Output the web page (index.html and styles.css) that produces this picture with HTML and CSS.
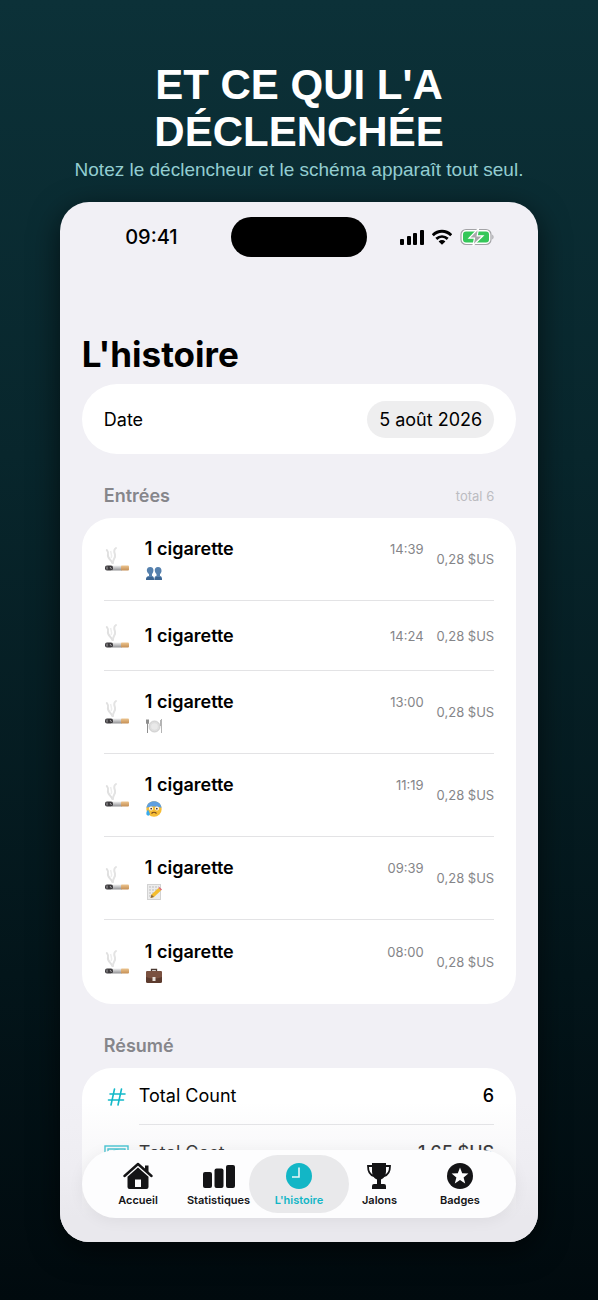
FILE: index.html
```html
<!DOCTYPE html>
<html lang="fr">
<head>
  <meta charset="UTF-8">
  <meta name="viewport" content="width=device-width, initial-scale=1.0">
  <title>L'histoire</title>
  <link rel="stylesheet" href="styles.css">
</head>
<body>
  <!-- shared icons -->
  <svg class="sprite" aria-hidden="true">
    <defs>
      <linearGradient id="filterGrad" x1="0" y1="0" x2="0" y2="1">
        <stop offset="0" stop-color="#ecc48e"/>
        <stop offset="1" stop-color="#c48e54"/>
      </linearGradient>
      <linearGradient id="paperGrad" x1="0" y1="0" x2="0" y2="1">
        <stop offset="0" stop-color="#f0f0f0"/>
        <stop offset="1" stop-color="#8f8f92"/>
      </linearGradient>
    </defs>
    <symbol id="cigarette" viewBox="0 0 26 26">
      <path d="M8.500 17C7 13.500 3 12 4 8.500 4.800 6.500 3.500 5 2.800 4" fill="none" stroke="#e0e0e0" stroke-width="2" stroke-linecap="round"/>
      <path d="M9 17c-.5-4 3-5 2-8.500C10.200 6 9 4 12 2" fill="none" stroke="#e3e3e3" stroke-width="2" stroke-linecap="round"/>
      <path d="M7 12c1.500-3 0-5-.5-7" fill="none" stroke="#eeeeee" stroke-width="1.500"/>
      <rect x="8" y="19.500" width="10" height="5" fill="url(#paperGrad)"/>
      <rect x="1" y="19.500" width="8" height="5" rx="2" fill="#3c3a3d"/>
      <path d="M3 20.500v3M6 21l1.500 2" stroke="#a5a3a6" stroke-width="1"/>
      <rect x="17" y="19.500" width="8" height="5" rx="1" fill="url(#filterGrad)"/>
    </symbol>
  </svg>

  <header class="intro">
    <h1>Et ce qui l'a déclenchée</h1>
    <p>Notez le déclencheur et le schéma apparaît tout seul.</p>
  </header>

  <div class="phone">
    <div class="status-bar">
      <span class="clock">09:41</span>
      <span class="island"></span>
      <span class="status-icons">
        <svg width="24" height="16" viewBox="0 0 24 16">
          <rect x="0" y="10" width="4" height="6" rx="1"/>
          <rect x="7" y="7" width="4" height="9" rx="1"/>
          <rect x="13" y="4" width="4" height="12" rx="1"/>
          <rect x="20" y="1" width="4" height="15" rx="1"/>
        </svg>
        <svg width="20" height="16" viewBox="0 0 20 16">
          <g fill="none" stroke="#000" stroke-width="2.800">
            <path d="M.8 6.200C6 .9 14 .9 19.200 6.200"/>
            <path d="M4.300 9.900C7.700 6.800 12.300 6.800 15.700 9.900"/>
          </g>
          <path d="M10 15.700l-3.400-3.300c2-1.800 4.800-1.800 6.800 0z"/>
        </svg>
        <svg width="34" height="18" viewBox="0 0 34 18">
          <rect x="1" y="1.500" width="30" height="15" rx="5" fill="#fff" stroke="#a3a3a6" stroke-width="1.200"/>
          <rect x="3" y="3.500" width="26" height="11" rx="3" fill="#34c759"/>
          <path d="M32.300 6.500c1.600.8 1.600 4.200 0 5z" fill="#a3a3a6"/>
          <path d="M18.500 .5L9 10.200h5.500L13 17.500 23 7.800h-5.800z" fill="#a9a9ab" stroke="#fff" stroke-width="1.200"/>
        </svg>
      </span>
    </div>

    <main class="screen">
      <h2>L'histoire</h2>

      <section class="card date-card">
        <label for="dateBtn">Date</label>
        <button type="button" id="dateBtn">5 août 2026</button>
      </section>

      <div class="section-head">
        <h3>Entrées</h3>
        <span>total 6</span>
      </div>
      <ul class="card entries">
        <li>
          <svg class="cig"><use href="#cigarette"/></svg>
          <div class="info">
            <div class="line"><strong>1 cigarette</strong><time>14:39</time></div>
            <div class="trigger">
              <svg viewBox="0 0 16 16">
                <g fill="#5580ad">
                  <path d="M0 15c0-3 1-4 3-4V9C0 7 0 2 4.200 2S8 7 6 9v2c1.500 0 2 1 2 4z"/>
                  <path d="M8.500 15c0-3 0-4 2-4V9C8 7 8 2 12 2s4.500 5 2 7v2c1.500 0 2 1 2 4z"/>
                </g>
                <path d="M0 15c0-2 1-3 2-3h4c1 0 2 1 2 3zM8.500 15c0-2 1-3 2-3H14c1 0 2 1 2 3z" fill="#3c6592"/>
              </svg>
            </div>
          </div>
          <span class="price">0,28 $US</span>
        </li>
        <li class="short">
          <svg class="cig"><use href="#cigarette"/></svg>
          <div class="info">
            <div class="line"><strong>1 cigarette</strong><time>14:24</time></div>
          </div>
          <span class="price">0,28 $US</span>
        </li>
        <li>
          <svg class="cig"><use href="#cigarette"/></svg>
          <div class="info">
            <div class="line"><strong>1 cigarette</strong><time>13:00</time></div>
            <div class="trigger">
              <svg viewBox="0 0 16 16">
                <circle cx="8.500" cy="8.500" r="5.500" fill="#dedede" stroke="#cfcfcf"/>
                <circle cx="8.500" cy="8.500" r="3.300" fill="#e9e9e9"/>
                <path d="M.5 1.500v4h2v-4M1.500 1.500V15" fill="none" stroke="#8e8e8e"/>
                <path d="M15.500 1v14M14.500 2v6" fill="none" stroke="#b4b4b4"/>
              </svg>
            </div>
          </div>
          <span class="price">0,28 $US</span>
        </li>
        <li>
          <svg class="cig"><use href="#cigarette"/></svg>
          <div class="info">
            <div class="line"><strong>1 cigarette</strong><time>11:19</time></div>
            <div class="trigger">
              <svg viewBox="0 0 16 16">
                <circle cx="8" cy="8" r="7.700" fill="#f6bd35"/>
                <path d="M.5 7C1 2.500 4 .3 8 .3s7 2.200 7.500 6.700C12 5 4 5 .5 7z" fill="#5f9fe0"/>
                <circle cx="5" cy="7.500" r="2" fill="#fff"/>
                <circle cx="11" cy="7.500" r="2" fill="#fff"/>
                <circle cx="5.200" cy="7.700" r=".9" fill="#5b3a1d"/>
                <circle cx="10.800" cy="7.700" r=".9" fill="#5b3a1d"/>
                <path d="M5.500 12.500c1.500-1.700 3.500-1.700 5 0" fill="none" stroke="#7b4a1b" stroke-width="1.200"/>
                <path d="M2 8.500C.5 10.500 0 12 .5 13.500s3 1.500 3.300 0C4 12 3 10.500 2 8.500z" fill="#37aaf0"/>
              </svg>
            </div>
          </div>
          <span class="price">0,28 $US</span>
        </li>
        <li>
          <svg class="cig"><use href="#cigarette"/></svg>
          <div class="info">
            <div class="line"><strong>1 cigarette</strong><time>09:39</time></div>
            <div class="trigger">
              <svg viewBox="0 0 16 16">
                <rect x="1.500" y=".5" width="13" height="15" fill="#ececec" stroke="#d2d2d2"/>
                <path d="M3 3h10M3 6h8M3 9h5M3 12h3" stroke="#bdbdbd" stroke-dasharray="2 1"/>
                <path d="M4.500 14l1-3.500L12.500 4 15 6.500 8 13z" fill="#f4bd2e"/>
                <path d="M12.500 4l1-1L16 5.500l-1 1z" fill="#de6872"/>
                <path d="M4.500 14l1-3.500L8 13z" fill="#8d6a40"/>
              </svg>
            </div>
          </div>
          <span class="price">0,28 $US</span>
        </li>
        <li>
          <svg class="cig"><use href="#cigarette"/></svg>
          <div class="info">
            <div class="line"><strong>1 cigarette</strong><time>08:00</time></div>
            <div class="trigger">
              <svg viewBox="0 0 16 16">
                <path d="M5.500 4V1.500h5V4" fill="none" stroke="#4b3a33" stroke-width="1.300"/>
                <rect y="3" width="16" height="12" rx="1.500" fill="#5d3b2e"/>
                <path d="M0 4.500Q0 3 1.500 3h13Q16 3 16 4.500V9Q8 12 0 9z" fill="#7a5140"/>
                <rect x="6.500" y="9" width="3" height="4" fill="#e6dfd8"/>
              </svg>
            </div>
          </div>
          <span class="price">0,28 $US</span>
        </li>
      </ul>

      <div class="section-head">
        <h3>Résumé</h3>
      </div>
      <ul class="card summary">
        <li>
          <svg width="26" height="20" viewBox="0 0 26 20">
            <path d="M10.500 2l-3.500 16M17.500 2L14 18M6 7h15M4.500 13h15" fill="none" stroke="#12b9c9" stroke-width="1.600" stroke-linecap="round"/>
          </svg>
          <div class="row"><span>Total Count</span><b>6</b></div>
        </li>
        <li>
          <svg width="26" height="20" viewBox="0 0 26 20">
            <g fill="none" stroke="#12b9c9" stroke-width="1.400">
              <rect x="1" y="3" width="23" height="15"/>
              <path d="M4 15V6h17v9z"/>
              <circle cx="12.500" cy="11" r="4"/>
            </g>
          </svg>
          <div class="row"><span>Total Cost</span><b>1,65 $US</b></div>
        </li>
      </ul>
    </main>

    <nav class="tab-bar">
      <a href="#">
        <svg width="30" height="28" viewBox="0 0 30 28">
          <path d="M1.500 14L15 2l13.500 12" fill="none" stroke="#141416" stroke-width="2.400" stroke-linecap="round" stroke-linejoin="round"/>
          <path d="M22 3.500h3.500v7.500L22 8z"/>
          <path d="M15 5.500l10.500 9.300V25q0 2-2 2h-17q-2 0-2-2V14.800zM12 17.500V25h6v-7.500z" fill-rule="evenodd"/>
        </svg>
        Accueil
      </a>
      <a href="#">
        <svg width="32" height="28" viewBox="0 0 32 28">
          <rect x="0" y="10" width="9" height="16" rx="2"/>
          <rect x="11.500" y="6.500" width="9" height="19.500" rx="2"/>
          <rect x="23" y="3" width="9" height="23" rx="2"/>
        </svg>
        Statistiques
      </a>
      <a href="#" class="active">
        <svg width="28" height="28" viewBox="0 0 28 28">
          <circle cx="14" cy="14" r="13"/>
          <path d="M14 5.500V15H7" fill="none" stroke="#e9f7f8" stroke-width="1.600"/>
        </svg>
        L'histoire
      </a>
      <a href="#">
        <svg width="26" height="28" viewBox="0 0 26 28">
          <path d="M6 1h14v8c0 5-2.500 7.500-5 8.500v4.500h3q2 0 2 2v3H6v-3q0-2 2-2h3v-4.500C8.500 16.500 6 14 6 9z"/>
          <path d="M7 4H2c0 5 1.500 9 6 10M19 4h5c0 5-1.500 9-6 10" fill="none" stroke="#141416" stroke-width="1.800"/>
        </svg>
        Jalons
      </a>
      <a href="#">
        <svg width="28" height="28" viewBox="0 0 28 28">
          <circle cx="14" cy="14" r="13"/>
          <path d="M14 5.500l2.200 5.800 6.200.3-4.800 3.900 1.600 6-5.200-3.400-5.200 3.400 1.600-6-4.800-3.900 6.200-.3z" fill="#fff"/>
        </svg>
        Badges
      </a>
    </nav>
  </div>
</body>
</html>
```
FILE: styles.css
```css
* {
  box-sizing: border-box;
  margin: 0;
  padding: 0;
}

body {
  font-family: Inter, 'Liberation Sans', sans-serif;
  color: #000;
  min-height: 100vh;
  padding: 61px 10% 58px;
  background: linear-gradient(180deg, #0c3138 0%, #08262c 35%, #03151a 75%, #010a0e 100%);
}

.sprite {
  position: absolute;
  width: 0;
  height: 0;
}

.intro {
  font-family: 'Liberation Sans', Arial, sans-serif;
  text-align: center;
  margin: 0 -40px 20px;
}

.intro h1 {
  max-width: 360px;
  margin: 0 auto;
  color: #fff;
  font-size: 42px;
  line-height: 47px;
  text-transform: uppercase;
}

.intro p {
  padding-top: 3px;
  color: #93cdd1;
  font-size: 19px;
  line-height: 24px;
}

/* Phone */
.phone {
  position: relative;
  aspect-ratio: 46 / 100;
  overflow: hidden;
  border-radius: 29px;
  background: #f1f0f5;
  box-shadow: 0 8px 30px rgba(0, 0, 0, 0.6);
}

.phone::after {
  content: '';
  position: absolute;
  inset: auto 0 0;
  height: 140px;
  background: linear-gradient(180deg, rgba(233, 232, 237, 0), rgba(233, 232, 237, 0.4) 50%, #e9e8ed 82%);
}

.status-bar {
  display: grid;
  grid-template-columns: 1fr 136px 1fr;
  align-items: center;
  padding: 15px 0;
}

.clock {
  justify-self: center;
  padding-left: 12px;
  font-size: 20px;
  font-weight: 500;
}

.island {
  height: 40px;
  border-radius: 20px;
  background: #000;
}

.status-icons {
  display: flex;
  align-items: center;
  justify-content: center;
  gap: 8px;
  padding-right: 12px;
}

.screen {
  padding: 58px 22px 0;
}

h2 {
  padding-bottom: 6px;
  font-size: 35px;
  line-height: 48px;
}

.card {
  background: #fff;
  border-radius: 30px;
  padding: 0 22px;
  list-style: none;
}

.date-card {
  display: flex;
  align-items: center;
  justify-content: space-between;
  height: 70px;
  border-radius: 35px;
  font-size: 18px;
}

.date-card button {
  padding: 0 12px;
  border: none;
  border-radius: 19px;
  background: #eeeeef;
  font: inherit;
  line-height: 37px;
  cursor: pointer;
}

.section-head {
  display: flex;
  align-items: center;
  justify-content: space-between;
  padding: 30px 22px 10px;
}

.section-head h3 {
  color: #86868b;
  font-size: 18px;
  font-weight: 600;
  line-height: 24px;
}

.section-head span {
  color: #bcbcc1;
  font-size: 13px;
}

/* Entries */
.entries {
  padding-bottom: 1px;
}

.entries li {
  display: flex;
  align-items: center;
  height: 83px;
  border-bottom: 1px solid #e3e3e5;
}

.entries li.short {
  height: 70px;
}

.entries li:last-child {
  border-bottom: none;
}

.cig {
  width: 26px;
  height: 26px;
  margin-right: 15px;
}

.info {
  flex: 1;
}

.line {
  display: flex;
  align-items: center;
  justify-content: space-between;
  line-height: 24px;
}

.line strong {
  font-size: 18px;
  font-weight: 600;
}

time,
.price {
  color: #858589;
  font-size: 13px;
}

.price {
  margin-left: 13px;
}

.trigger {
  display: flex;
  align-items: flex-end;
  height: 20px;
  padding-left: 1px;
}

.trigger svg {
  width: 16px;
  height: 16px;
}

/* Summary */
.summary {
  padding-bottom: 56px;
  font-size: 18px;
}

.summary li {
  display: flex;
  align-items: center;
  gap: 9px;
}

.summary .row {
  flex: 1;
  display: flex;
  justify-content: space-between;
  line-height: 56px;
  border-bottom: 1px solid #e3e3e5;
}

.summary li:last-child .row {
  border-bottom: none;
}

.summary b {
  font-weight: 500;
}

/* Tab bar */
.tab-bar {
  position: absolute;
  z-index: 1;
  left: 22px;
  right: 22px;
  bottom: 24px;
  display: flex;
  padding: 5px 16px;
  border-radius: 34px;
  background: #fdfdfe;
  box-shadow: 0 2px 16px rgba(0, 0, 0, 0.06);
}

.tab-bar a {
  flex: 1 1 0;
  display: flex;
  flex-direction: column;
  align-items: center;
  gap: 2px;
  height: 58px;
  padding-top: 7px;
  border-radius: 29px;
  color: #141416;
  fill: #141416;
  font-size: 11px;
  font-weight: 600;
  line-height: 16px;
  text-decoration: none;
}

.tab-bar a.active {
  flex-basis: 20px;
  margin: 0 -10px;
  background: #e9e9eb;
  color: #12b6c6;
  fill: #12b6c6;
}
```
